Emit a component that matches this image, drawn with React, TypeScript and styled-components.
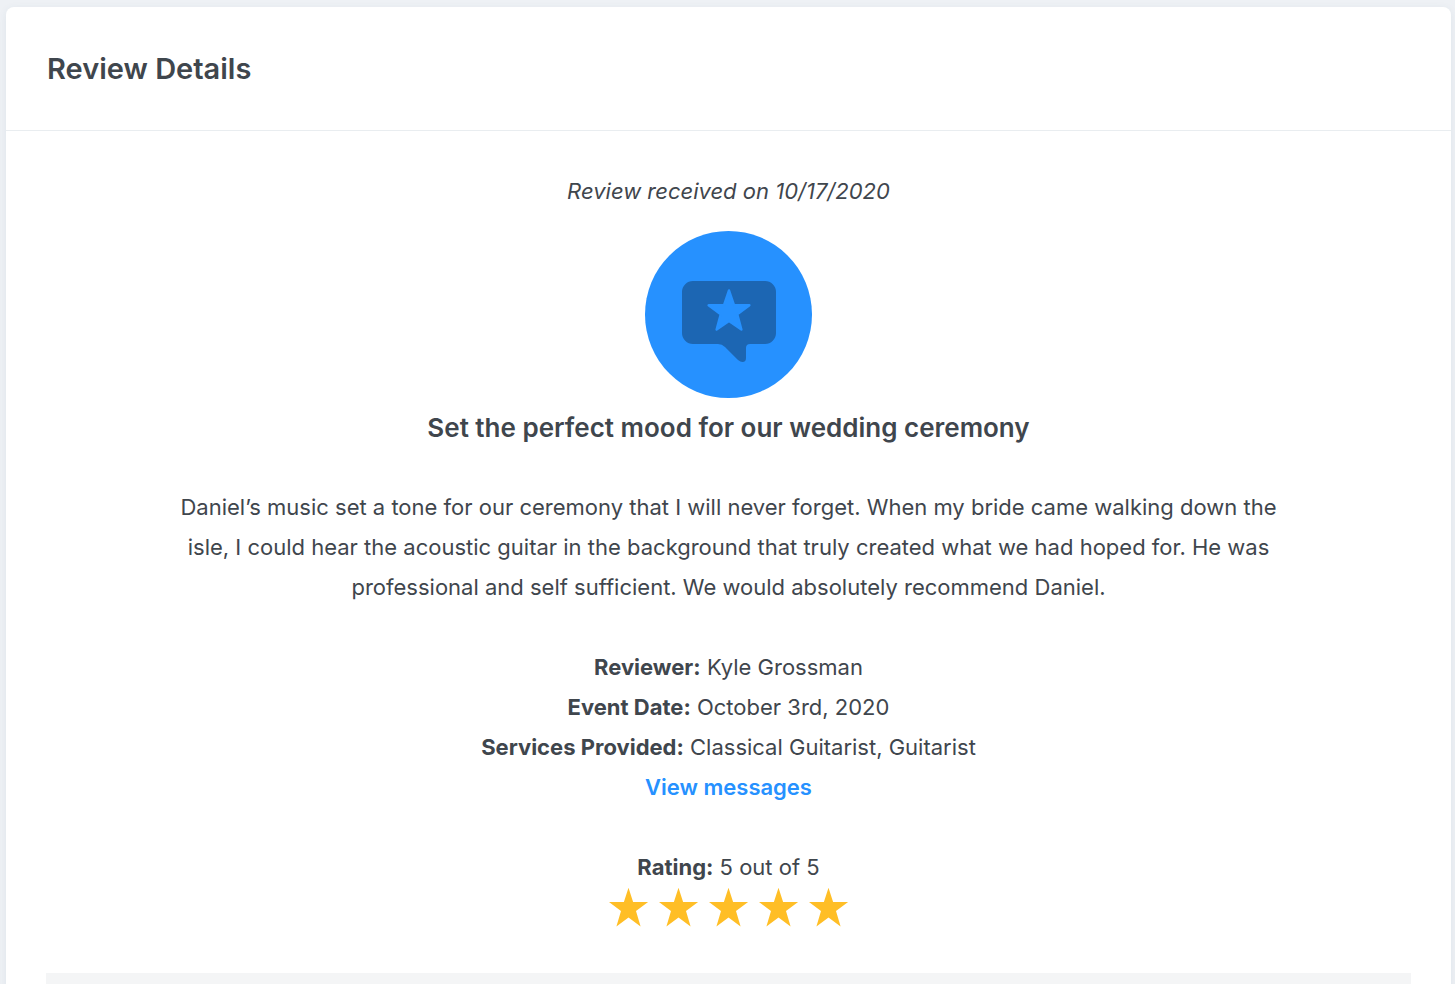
import React from "react";
import styled, { createGlobalStyle } from "styled-components";

const GlobalStyle = createGlobalStyle`
  *, *::before, *::after { box-sizing: border-box; }
  body {
    margin: 0;
    background: #eef1f5;
    color: #3f464d;
    font-family: Inter, "Liberation Sans", sans-serif;
    font-size: 22px;
    line-height: 40px;
  }
`;

const Page = styled.main`
  padding: 7px 4px 0 6px;
`;

const Card = styled.section`
  background: #fff;
  border-radius: 8px;
  box-shadow: 0 2px 8px rgba(50, 90, 120, 0.08);
`;

const CardHeader = styled.header`
  padding: 42px 41px 41px;
  border-bottom: 1px solid #e9edf0;
`;

const CardTitle = styled.h1`
  margin: 0;
  font-size: 29px;
  line-height: 40px;
  font-weight: 600;
`;

const CardBody = styled.div`
  display: flex;
  flex-direction: column;
  align-items: center;
  padding: 40px 40px 0;
  text-align: center;
`;

const Received = styled.p`
  margin: 0 0 20px;
  font-style: italic;
`;

const Badge = styled.svg`
  display: block;
  width: 167px;
  height: 167px;
  margin-bottom: 10px;
`;

const ReviewTitle = styled.h2`
  margin: 0 0 39px;
  font-size: 26px;
  line-height: 40px;
  font-weight: 600;
`;

const ReviewText = styled.p`
  margin: 0 0 40px;
  max-width: 1140px;
`;

const Details = styled.div`
  margin-bottom: 40px;
`;

const DetailLine = styled.p`
  margin: 0;
`;

const Label = styled.strong`
  font-weight: 700;
`;

const MessagesLink = styled.a`
  color: #2691ff;
  font-weight: 600;
  text-decoration: none;
`;

const Stars = styled.div`
  display: flex;
  gap: 10px;
  margin-bottom: 46px;
`;

const StarShape = styled.svg`
  display: block;
  width: 40px;
  height: 40px;
  fill: #ffbe26;
`;

const Divider = styled.div`
  align-self: stretch;
  height: 40px;
  background: #f4f5f6;
`;

const Star = () => (
  <StarShape viewBox="0 0 40 40" aria-hidden="true">
    <path d="M19.5 0.8 24.1 15H39.1L27 23.9 31.6 39.4 19.5 30.4 7.4 39.4 12 23.9 0 15H14.9Z" />
  </StarShape>
);

const details = [
  { label: "Reviewer:", value: "Kyle Grossman" },
  { label: "Event Date:", value: "October 3rd, 2020" },
  { label: "Services Provided:", value: "Classical Guitarist, Guitarist" },
];

export default function App() {
  return (
    <>
      <GlobalStyle />
      <Page>
        <Card>
          <CardHeader>
            <CardTitle>Review Details</CardTitle>
          </CardHeader>
          <CardBody>
            <Received>Review received on 10/17/2020</Received>
            <Badge viewBox="0 0 167 167" aria-hidden="true">
              <circle cx="83.5" cy="83.5" r="83.5" fill="#2691ff" />
              <path
                fill="#1c66b3"
                d="M48 50H120A11 11 0 0 1 131 61V102A11 11 0 0 1 120 113H105Q101 113 101 117V127Q101 131 97.500 131Q95.500 131 93 129L80 116Q77 113 73 113H48A11 11 0 0 1 37 102V61A11 11 0 0 1 48 50Z"
              />
              <path
                fill="#2691ff"
                stroke="#2691ff"
                strokeWidth="2.4"
                strokeLinejoin="round"
                d="M84 59.5 89 74.2H104.4L92.3 83.3 96.4 98.6 84 90 71.6 98.6 75.7 83.3 63.6 74.2H79Z"
              />
            </Badge>
            <ReviewTitle>Set the perfect mood for our wedding ceremony</ReviewTitle>
            <ReviewText>
              Daniel’s music set a tone for our ceremony that I will never forget. When my bride came
              walking down the isle, I could hear the acoustic guitar in the background that truly
              created what we had hoped for. He was professional and self sufficient. We would
              absolutely recommend Daniel.
            </ReviewText>
            <Details>
              {details.map(({ label, value }) => (
                <DetailLine key={label}>
                  <Label>{label}</Label> {value}
                </DetailLine>
              ))}
              <DetailLine>
                <MessagesLink href="#messages">View messages</MessagesLink>
              </DetailLine>
            </Details>
            <DetailLine>
              <Label>Rating:</Label> 5 out of 5
            </DetailLine>
            <Stars role="img" aria-label="5 out of 5 stars">
              {[1, 2, 3, 4, 5].map((n) => (
                <Star key={n} />
              ))}
            </Stars>
            <Divider />
          </CardBody>
        </Card>
      </Page>
    </>
  );
}
